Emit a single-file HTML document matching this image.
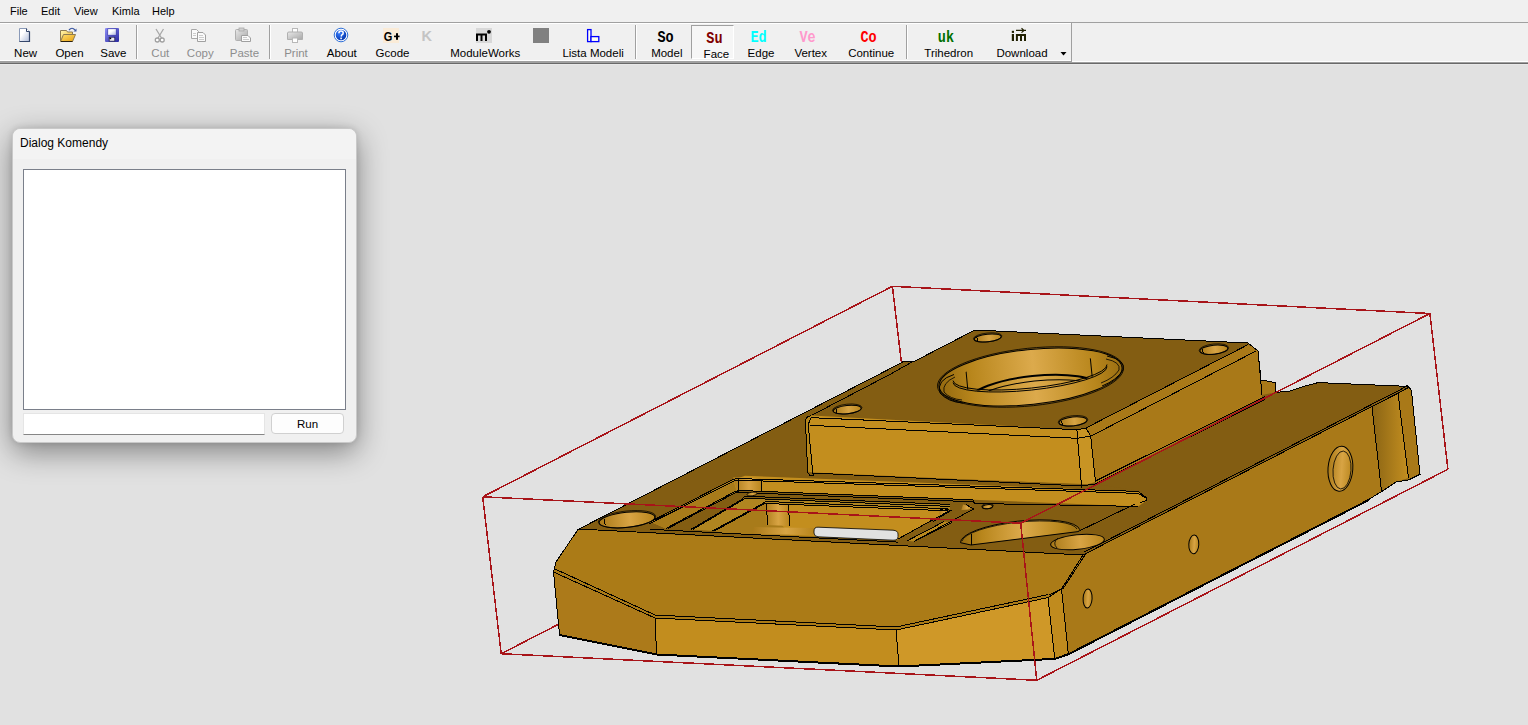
<!DOCTYPE html>
<html><head><meta charset="utf-8">
<style>
*{margin:0;padding:0;box-sizing:border-box}
html,body{width:1528px;height:725px;overflow:hidden;background:#e1e1e1;font-family:"Liberation Sans",sans-serif;position:relative}
.abs{position:absolute}
#menubar{left:0;top:0;width:1528px;height:22px;background:#f0f0f0}
.mi{position:absolute;top:5px;font-size:11px;color:#000;line-height:13px;white-space:nowrap}
#tbarea{left:0;top:22px;width:1528px;height:41px;background:#f0f0f0;border-top:1px solid #a0a0a0}
#tbline1{left:0;top:63px;width:1528px;height:1px;background:#696969}
#tbline2{left:0;top:62px;width:1528px;height:1px;background:#a0a0a0}
#tbline0{left:0;top:64px;width:1528px;height:1px;background:#e8e8e8}
#tbl3{left:0;top:61px;width:1071px;height:1px;background:#a0a0a0}
#tbl4{left:0;top:60px;width:1071px;height:1px;background:#fff}
#tbl5{left:1072px;top:61px;width:456px;height:1px;background:#fff}
#tbhl{left:0;top:23px;width:1071px;height:1px;background:#fff}
#tbright{left:1071px;top:23px;width:1px;height:39px;background:#a0a0a0}
.lbl{position:absolute;top:47px;font-size:11.5px;line-height:13px;color:#000;white-space:nowrap;transform:translateX(-50%)}
.dis{color:#8d8d8d}
.sep{position:absolute;top:25px;width:2px;height:34px;border-left:1px solid #a0a0a0;border-right:1px solid #fff}
.big{position:absolute;top:30px;font-family:"Liberation Mono",monospace;font-weight:bold;font-size:13.5px;line-height:14px;white-space:nowrap;transform:translateX(-50%) scaleY(1.2);transform-origin:50% 0}
#dlg{left:12px;top:128px;width:345px;height:315px;background:#f0f0f0;border:1px solid #c9c9c9;border-radius:8px;box-shadow:0 9px 30px rgba(0,0,0,0.42),0 0 6px rgba(0,0,0,0.12)}
</style></head><body>
<div id="menubar" class="abs">
<span class="mi" style="left:10px">File</span>
<span class="mi" style="left:41px">Edit</span>
<span class="mi" style="left:74px">View</span>
<span class="mi" style="left:112px">Kimla</span>
<span class="mi" style="left:152px">Help</span>
</div>
<div id="tbarea" class="abs"></div>
<div id="tbhl" class="abs"></div>
<div id="tbright" class="abs"></div>
<div id="tbline2" class="abs"></div>
<div id="tbline1" class="abs"></div>
<div id="tbline0" class="abs"></div>
<div id="tbl3" class="abs"></div><div id="tbl4" class="abs"></div><div id="tbl5" class="abs"></div>

<!-- TOOLBAR -->
<div class="abs" style="left:691px;top:25px;width:43px;height:34px;background:#f6f6f6;border-top:1px solid #a0a0a0;border-left:1px solid #a0a0a0;border-right:1px solid #fff;border-bottom:1px solid #fff"></div>

<span class="lbl" style="left:25.6px">New</span>
<span class="lbl" style="left:69.5px">Open</span>
<span class="lbl" style="left:113.4px">Save</span>
<div class="sep" style="left:136px"></div>
<span class="lbl dis" style="left:160.3px">Cut</span>
<span class="lbl dis" style="left:200.3px">Copy</span>
<span class="lbl dis" style="left:244.5px">Paste</span>
<div class="sep" style="left:269px"></div>
<span class="lbl dis" style="left:296px">Print</span>
<span class="lbl" style="left:341.8px">About</span>
<span class="lbl" style="left:392.5px">Gcode</span>
<span class="lbl" style="left:485.3px">ModuleWorks</span>
<span class="lbl" style="left:593.1px">Lista Modeli</span>
<div class="sep" style="left:635px"></div>
<span class="lbl" style="left:666.8px">Model</span>
<span class="lbl" style="left:716.4px;top:48px">Face</span>
<span class="lbl" style="left:761px">Edge</span>
<span class="lbl" style="left:810.7px">Vertex</span>
<span class="lbl" style="left:871.2px">Continue</span>
<div class="sep" style="left:906px"></div>
<span class="lbl" style="left:948.7px">Trihedron</span>
<span class="lbl" style="left:1022px">Download</span>


<svg class="abs" style="left:0;top:0" width="1100" height="64" viewBox="0 0 1100 64">
<defs>
<linearGradient id="gnew" x1="0" y1="0" x2="1" y2="1"><stop offset="0.35" stop-color="#fff"/><stop offset="1" stop-color="#aebbd8"/></linearGradient>
<linearGradient id="gfold" x1="0" y1="0" x2="1" y2="1"><stop offset="0" stop-color="#fff6b0"/><stop offset="1" stop-color="#f0b020"/></linearGradient>
<linearGradient id="gflap" x1="0" y1="0" x2="1" y2="1"><stop offset="0" stop-color="#ffe070"/><stop offset="1" stop-color="#e8a010"/></linearGradient>
<linearGradient id="gsave" x1="0" y1="0" x2="1" y2="1"><stop offset="0" stop-color="#9090f8"/><stop offset="1" stop-color="#2828a0"/></linearGradient>
<linearGradient id="glab" x1="0" y1="0" x2="1" y2="1"><stop offset="0.4" stop-color="#fff"/><stop offset="1" stop-color="#b0b8e0"/></linearGradient>
<radialGradient id="gabout" cx="0.35" cy="0.3" r="0.8"><stop offset="0" stop-color="#3a80ff"/><stop offset="1" stop-color="#0030a8"/></radialGradient>
<linearGradient id="ggray" x1="0" y1="0" x2="1" y2="1"><stop offset="0" stop-color="#e8e8e8"/><stop offset="1" stop-color="#a8a8a8"/></linearGradient>
</defs>
<!-- New -->
<path d="M19.5,28.5 H26.5 L29.5,31.5 V41.5 H19.5 Z" fill="url(#gnew)" stroke="#8a9ab8" stroke-width="1"/>
<path d="M29.5,31.5 V41.5 H19.5" fill="none" stroke="#34466a" stroke-width="1.2"/>
<path d="M26.5,28.5 V31.5 H29.5" fill="#fff" stroke="#34466a" stroke-width="1"/>
<!-- Open -->
<path d="M60.5,41.5 V30.5 H66.5 L67.5,32 H72.5 V34" fill="url(#gfold)" stroke="#8c7a52" stroke-width="1"/>
<path d="M60.5,41.5 L63.5,34.5 H75.5 L72.5,41.5 Z" fill="url(#gflap)" stroke="#8c7a52" stroke-width="1"/>
<path d="M61,41.5 H72.5" stroke="#2a2010" stroke-width="1"/>
<path d="M69,30 Q72,26.5 75,30" fill="none" stroke="#3a56a0" stroke-width="1.2"/>
<path d="M73.5,31.5 L76.5,28.5 L76.5,31.5 Z" fill="#3a56a0"/>
<!-- Save -->
<rect x="105" y="28" width="14" height="14" rx="1" fill="url(#gsave)"/>
<rect x="107.8" y="28.8" width="8.4" height="6.4" fill="url(#glab)" stroke="#2a2aa0" stroke-width="0.6"/>
<rect x="109.2" y="37.2" width="5.6" height="4" fill="#eee" stroke="#222050" stroke-width="0.8"/>
<rect x="109.6" y="37.6" width="1.6" height="1.6" fill="#000"/>
<!-- Cut -->
<path d="M156,29 L161.5,38 M163.5,29 L158,38" stroke="#a8a8a8" stroke-width="1.3" fill="none"/>
<circle cx="157.3" cy="40" r="2" fill="#fff" stroke="#a0a0a0" stroke-width="1.3"/>
<circle cx="162.2" cy="40" r="2" fill="#fff" stroke="#a0a0a0" stroke-width="1.3"/>
<!-- Copy -->
<path d="M191.5,29.5 H196.5 L198.5,31.5 V38.5 H191.5 Z" fill="#fafafa" stroke="#a8a8a8"/>
<path d="M197.5,32.5 H203 L205.5,35 V41.5 H197.5 Z" fill="#fafafa" stroke="#a0a0a0"/>
<path d="M199,35.5 H203 M199,37.5 H204 M199,39.5 H204 M193,33.5 H196 M193,35.5 H196" stroke="#c0c0c0" stroke-width="0.8"/>
<!-- Paste -->
<rect x="235.5" y="29.5" width="12" height="11" rx="1" fill="url(#ggray)" stroke="#b0b0b0"/>
<rect x="239" y="28" width="5" height="3" fill="#d0d0d0" stroke="#a8a8a8" stroke-width="0.8"/>
<path d="M241.5,35.5 H248 L250.5,38 V41.5 H241.5 Z" fill="#fafafa" stroke="#a0a0a0"/>
<path d="M243,37.5 H247 M243,39.5 H249" stroke="#c0c0c0" stroke-width="0.8"/>
<!-- Print -->
<rect x="292.5" y="28.5" width="5" height="4" fill="#fff" stroke="#b8b8b8"/>
<path d="M287.5,33 Q287.5,32 289,32 H301 Q302.5,32 302.5,33 V39.5 H287.5 Z" fill="url(#ggray)" stroke="#b0b0b0"/>
<rect x="292.5" y="38" width="5" height="4.5" fill="#fff" stroke="#b8b8b8"/>
<!-- About -->
<circle cx="341" cy="35" r="6.8" fill="#fff" stroke="#3070d8" stroke-width="1"/>
<circle cx="341" cy="35" r="5.3" fill="url(#gabout)"/>
<path d="M338.9,33.2 Q338.9,31 341,31 Q343.2,31 343.2,33 Q343.2,34.4 341.6,35.2 L341.1,36.6" fill="none" stroke="#fff" stroke-width="1.5"/>
<rect x="340.3" y="37.6" width="1.6" height="1.6" fill="#fff"/>
<!-- G+ -->
<rect x="383" y="28" width="16" height="15" fill="#faebd7"/>
<text x="383.8" y="41" font-family="Liberation Sans" font-weight="bold" font-size="13" fill="#000" transform="translate(383.8 0) scale(0.85 1) translate(-383.8 0)">G</text>
<rect x="396" y="33.2" width="2" height="6.6" fill="#000"/>
<rect x="394" y="35.6" width="5.6" height="1.6" fill="#000"/>
<!-- K -->
<text x="421.5" y="40.8" font-family="Liberation Sans" font-weight="bold" font-size="14.5" fill="#c4c4c4">K</text>
<!-- m -->
<rect x="476" y="28" width="16" height="15" fill="#d8d8d8"/>
<path d="M477,41 V34.5 H486 V41 M481.5,34.5 V41" fill="none" stroke="#000" stroke-width="2"/>
<circle cx="489" cy="31.8" r="1.9" fill="#000"/>
<!-- gray square -->
<rect x="533" y="28" width="16" height="15" fill="#808080"/>
<!-- L -->
<rect x="587.6" y="29.6" width="3.4" height="12" fill="#fffff0" stroke="#0000ff" stroke-width="1.3"/>
<rect x="591" y="36.6" width="7.8" height="5" fill="#fffff0" stroke="#0000ff" stroke-width="1.3"/>
<!-- im -->
<rect x="1011.8" y="30.8" width="2.2" height="2.1" fill="#202000"/>
<rect x="1011.8" y="34" width="2.2" height="7" fill="#202000"/>
<path d="M1016.9,41 V35 H1025 V41 M1021,35 V41" fill="none" stroke="#202000" stroke-width="2"/>
<path d="M1016,30.4 H1026 M1021.5,28.2 L1024,30.4 L1021.5,32.6" fill="none" stroke="#202000" stroke-width="1.2"/>
<!-- dropdown arrow -->
<path d="M1060.5,52 H1066.5 L1063.5,55.5 Z" fill="#000"/>
</svg>

<span class="big" style="left:665.6px;color:#000">So</span>
<span class="big" style="left:714.4px;top:31px;color:#800000">Su</span>
<span class="big" style="left:758.6px;color:#00ffff">Ed</span>
<span class="big" style="left:807.5px;color:#ff99cc">Ve</span>
<span class="big" style="left:868.5px;color:#ff0000">Co</span>
<span class="big" style="left:945.9px;color:#007000">uk</span>


<div id="dlg" class="abs"><div style="height:30px;background:#f3f3f3;border-radius:8px 8px 0 0"></div></div>
<div class="abs" style="left:20px;top:136px;font-size:12px;line-height:15px;color:#000;white-space:nowrap">Dialog Komendy</div>
<div class="abs" style="left:23px;top:169px;width:323px;height:241px;background:#fff;border:1px solid #7a7f8a"></div>
<div class="abs" style="left:23px;top:413px;width:242px;height:22px;background:#fff;border:1px solid #e5e5e5;border-bottom:1px solid #868686"></div>
<div class="abs" style="left:271px;top:413px;width:73px;height:21px;background:#fdfdfd;border:1px solid #d0d0d0;border-radius:4px"></div>
<div class="abs" style="left:297px;top:418px;font-size:11.5px;line-height:13px;color:#000;white-space:nowrap">Run</div>

<svg class="abs" style="left:0;top:0" width="1528" height="725" viewBox="0 0 1528 725">
<defs><linearGradient id="gbore" x1="0" x2="1" y1="0" y2="0"><stop offset="0" stop-color="#94690f"/><stop offset="0.18" stop-color="#b8861c"/><stop offset="0.52" stop-color="#dcaa4c"/><stop offset="0.85" stop-color="#b8861c"/><stop offset="1" stop-color="#9a6e12"/></linearGradient><linearGradient id="ghole" x1="0" x2="1" y1="0" y2="0"><stop offset="0" stop-color="#a97918"/><stop offset="0.55" stop-color="#d8a444"/><stop offset="1" stop-color="#b8851c"/></linearGradient><linearGradient id="gend" x1="0" x2="1" y1="0" y2="0"><stop offset="0" stop-color="#8a6414"/><stop offset="1" stop-color="#c48f20"/></linearGradient></defs>
<polygon points="578.0,529.5 901.0,363.0 904.0,361.0 915.0,361.0 975.0,330.0 1248.0,343.0 1258.0,351.0 1261.0,380.0 1275.0,382.5 1275.0,392.5 1290.0,391.0 1305.0,386.0 1318.0,382.6 1408.5,386.4 1411.4,390.3 1420.0,474.2 1408.5,480.0 1396.0,482.0 1381.5,491.6 1369.0,499.3 1069.0,653.5 1054.7,658.4 899.0,666.0 656.6,654.0 559.5,634.5 553.5,572.0 556.0,562.0" fill="#835d12" stroke="none" stroke-width="1" />
<polygon points="805.4,419.4 808.0,416.5 811.5,415.5 1077.0,429.7 1081.4,484.5 812.6,472.4 807.6,471.3" fill="#c38e1e" stroke="none" stroke-width="1" />
<polygon points="805.4,419.4 808.0,416.5 811.5,415.5 812.6,417.7 811.0,418.0 808.2,424.3 812.6,471.3 807.6,471.3" fill="#b5861c" stroke="none" stroke-width="1" />
<polygon points="1077.0,430.0 1085.9,428.0 1090.7,436.2 1095.5,482.0 1081.7,486.0" fill="#c89424" stroke="none" stroke-width="1" />
<polygon points="1085.9,428.0 1248.3,344.5 1257.9,350.3 1262.0,398.0 1095.5,484.0 1090.7,436.2" fill="#a97918" stroke="none" stroke-width="1" />
<polygon points="1261.0,380.0 1275.0,382.5 1275.0,392.5 1262.0,395.0" fill="#a97918" stroke="none" stroke-width="1" />
<polygon points="1083.0,555.0 1372.0,406.0 1381.5,491.6 1369.0,499.3 1068.3,653.5 1061.5,589.0" fill="#a97918" stroke="none" stroke-width="1" />
<polygon points="1372.0,406.5 1398.0,393.2 1408.5,478.0 1396.0,482.0 1381.5,491.6" fill="url(#gend)" stroke="none" stroke-width="1" />
<polygon points="1398.0,393.2 1408.5,387.4 1411.4,390.3 1420.0,474.2 1408.5,480.0" fill="#a97918" stroke="none" stroke-width="1" />
<polygon points="578.0,529.0 1083.0,555.0 1061.5,589.0 1048.0,597.6 896.0,630.0 655.0,618.0 553.5,572.0 556.0,562.0" fill="#ab7b17" stroke="none" stroke-width="1" />
<polygon points="553.5,572.0 655.0,618.0 656.6,654.0 559.5,634.5" fill="#ac7a1a" stroke="none" stroke-width="1" />
<polygon points="655.0,618.0 896.0,630.0 899.0,666.0 656.6,654.0" fill="#c28d1e" stroke="none" stroke-width="1" />
<polygon points="896.0,630.0 1048.0,597.6 1054.7,658.4 899.0,666.0" fill="#cf9828" stroke="none" stroke-width="1" />
<polygon points="1048.0,597.6 1061.5,589.0 1068.3,653.5 1054.7,658.4" fill="#c08b1e" stroke="none" stroke-width="1" />
<polygon points="812.0,473.5 1081.4,484.0 1095.0,484.0 1143.0,491.6 812.0,478.4" fill="#835d12" stroke="none" stroke-width="1" />
<polygon points="650.3,521.7 733.0,480.0 745.0,475.7 1138.0,491.4 1146.0,497.5 1146.0,501.0 1138.0,506.4 740.0,490.5 665.9,528.5" fill="#c38e1e" stroke="none" stroke-width="1" />
<polygon points="650.3,521.7 733.0,480.0 737.0,492.0 665.9,528.5" fill="#a87b1a" stroke="none" stroke-width="1" />
<polygon points="665.9,528.5 737.0,491.5 973.0,499.8 973.0,505.5 950.0,504.4 743.5,498.5 690.7,529.5" fill="#835d12" stroke="none" stroke-width="1" />
<polygon points="690.7,529.5 743.5,498.5 950.0,504.4 950.0,508.9 764.0,503.0 712.4,531.0" fill="#b08520" stroke="none" stroke-width="1" />
<polygon points="712.4,531.0 764.0,503.0 950.0,508.9 946.0,512.0 898.0,539.5 730.0,534.0" fill="#a87b1a" stroke="none" stroke-width="1" />
<polygon points="764.0,503.0 950.0,508.9 946.0,512.0 898.0,539.5 790.0,535.0" fill="#c38e1e" stroke="none" stroke-width="1" />
<polygon points="733.0,477.2 761.0,478.3 762.0,491.4 737.0,490.4" fill="url(#ghole)" stroke="none" stroke-width="1" />
<polygon points="764.0,503.0 788.0,504.0 790.0,526.0 766.0,525.0" fill="url(#ghole)" stroke="none" stroke-width="1" />
<polygon points="754.0,527.0 814.0,528.0 814.0,535.0 752.0,534.0" fill="url(#ghole)" stroke="none" stroke-width="1" />
<polygon points="963.0,504.5 972.0,507.0 966.0,513.0 961.0,511.0" fill="url(#ghole)" stroke="none" stroke-width="1" />
<polygon points="940.0,509.5 948.0,511.0 944.0,516.0 939.0,514.0" fill="url(#ghole)" stroke="none" stroke-width="1" />
<polygon points="648.0,529.2 898.0,542.1 900.0,546.0 648.0,533.0" fill="#835d12" stroke="none" stroke-width="1" />
<path d="M818,527.2 L893,530.2 Q898,530.6 898,534 L898,536.5 Q898,540.4 893,540.2 L818,536.8 Q814,536.5 814,533 L814,531 Q814,527 818,527.2 Z" fill="#e1e1e1" stroke="#000" stroke-width="0.8"/>
<polyline points="650.3,521.7 731.0,480.5 736.0,478.5 1138.0,491.4 1146.0,497.5 1146.0,500.5 1140.0,503.0" fill="none" stroke="#000" stroke-width="1" shape-rendering="crispEdges" />
<polyline points="649.3,523.7 731.0,482.5 736.0,480.1 1138.0,493.4 1146.0,498.1 1146.0,500.5 1140.0,503.0" fill="none" stroke="#000" stroke-width="1" shape-rendering="crispEdges" />
<polyline points="665.9,528.5 735.0,491.5 740.0,490.5 973.0,499.8 975.0,504.0" fill="none" stroke="#000" stroke-width="1" shape-rendering="crispEdges" />
<polyline points="667.9,528.5 735.8,492.5 740.0,492.5 973.0,501.8 975.0,504.0" fill="none" stroke="#000" stroke-width="1" shape-rendering="crispEdges" />
<polyline points="690.7,529.5 741.0,500.0 745.0,496.2 950.0,504.4" fill="none" stroke="#000" stroke-width="1" shape-rendering="crispEdges" />
<polyline points="692.7,529.5 741.6,500.6 745.0,498.2 950.0,506.4" fill="none" stroke="#000" stroke-width="1" shape-rendering="crispEdges" />
<polyline points="712.4,531.0 762.0,504.0 766.0,501.5 948.0,508.8" fill="none" stroke="#000" stroke-width="1" shape-rendering="crispEdges" />
<polyline points="714.4,531.0 762.6,504.6 766.0,503.5 948.0,510.8" fill="none" stroke="#000" stroke-width="1" shape-rendering="crispEdges" />
<line x1="1138.0" y1="506.4" x2="975.0" y2="503.5" stroke="#000" stroke-width="1" shape-rendering="crispEdges"/>
<polygon points="973.6,509.0 913.6,541.6 897.6,539.2 948.8,511.2" fill="#835d12" stroke="none" stroke-width="1" />
<polygon points="944.0,521.6 907.2,540.8 913.6,541.6 952.0,522.4" fill="#b8881e" stroke="none" stroke-width="1" />
<polyline points="966.0,504.5 973.6,509.0 913.6,541.6" fill="none" stroke="#000" stroke-width="1" shape-rendering="crispEdges" />
<polyline points="944.0,521.6 907.2,540.8" fill="none" stroke="#000" stroke-width="1" shape-rendering="crispEdges" />
<polyline points="952.0,522.4 913.6,541.6" fill="none" stroke="#000" stroke-width="1" shape-rendering="crispEdges" />
<polyline points="940.0,509.5 948.8,511.2 931.0,520.8 897.6,539.2" fill="none" stroke="#000" stroke-width="1" shape-rendering="crispEdges" />
<polyline points="943.0,508.5 951.0,510.5 933.0,521.5" fill="none" stroke="#000" stroke-width="1" shape-rendering="crispEdges" />
<line x1="766.0" y1="504.0" x2="768.0" y2="525.0" stroke="#000" stroke-width="1" shape-rendering="crispEdges"/>
<line x1="788.0" y1="504.0" x2="790.0" y2="526.0" stroke="#000" stroke-width="1" shape-rendering="crispEdges"/>
<line x1="738.0" y1="479.0" x2="738.0" y2="492.0" stroke="#000" stroke-width="1" shape-rendering="crispEdges"/>
<line x1="761.0" y1="479.5" x2="762.0" y2="491.0" stroke="#000" stroke-width="1" shape-rendering="crispEdges"/>
<line x1="650.0" y1="529.3" x2="898.0" y2="542.1" stroke="#000" stroke-width="1" shape-rendering="crispEdges"/>
<ellipse cx="752" cy="494" rx="5" ry="1.8" transform="rotate(-6 752 494)" fill="url(#ghole)" stroke="#000" stroke-width="0.8" />
<ellipse cx="627" cy="519.8" rx="28" ry="7.6" transform="rotate(-6 627 519.8)" fill="url(#ghole)" stroke="#000" stroke-width="1" />
<ellipse cx="627" cy="519.1999999999999" rx="28.8" ry="8.2" transform="rotate(-6 627 519.1999999999999)" fill="none" stroke="#000" stroke-width="0.7" />
<line x1="604.6" y1="518.7" x2="605.1" y2="525.5" stroke="#000" stroke-width="1" shape-rendering="crispEdges"/>
<ellipse cx="847.2" cy="409.6" rx="14" ry="4.2" transform="rotate(-6 847.2 409.6)" fill="url(#ghole)" stroke="#000" stroke-width="1" />
<ellipse cx="847.2" cy="409.0" rx="14.8" ry="4.8" transform="rotate(-6 847.2 409.0)" fill="none" stroke="#000" stroke-width="0.7" />
<line x1="836.0" y1="409.0" x2="836.5" y2="412.8" stroke="#000" stroke-width="1" shape-rendering="crispEdges"/>
<ellipse cx="987.7" cy="338" rx="13.5" ry="3.8" transform="rotate(-6 987.7 338)" fill="url(#ghole)" stroke="#000" stroke-width="1" />
<ellipse cx="987.7" cy="337.4" rx="14.3" ry="4.3999999999999995" transform="rotate(-6 987.7 337.4)" fill="none" stroke="#000" stroke-width="0.7" />
<line x1="976.9" y1="337.4" x2="977.4" y2="340.9" stroke="#000" stroke-width="1" shape-rendering="crispEdges"/>
<ellipse cx="1213.9" cy="349.7" rx="14" ry="4.5" transform="rotate(-6 1213.9 349.7)" fill="url(#ghole)" stroke="#000" stroke-width="1" />
<ellipse cx="1213.9" cy="349.09999999999997" rx="14.8" ry="5.1" transform="rotate(-6 1213.9 349.09999999999997)" fill="none" stroke="#000" stroke-width="0.7" />
<line x1="1202.7" y1="349.0" x2="1203.2" y2="353.1" stroke="#000" stroke-width="1" shape-rendering="crispEdges"/>
<ellipse cx="1073" cy="421.4" rx="14" ry="4.5" transform="rotate(-6 1073 421.4)" fill="url(#ghole)" stroke="#000" stroke-width="1" />
<ellipse cx="1073" cy="420.79999999999995" rx="14.8" ry="5.1" transform="rotate(-6 1073 420.79999999999995)" fill="none" stroke="#000" stroke-width="0.7" />
<line x1="1061.8" y1="420.7" x2="1062.3" y2="424.8" stroke="#000" stroke-width="1" shape-rendering="crispEdges"/>
<ellipse cx="987.5" cy="506.7" rx="5" ry="2" transform="rotate(-6 987.5 506.7)" fill="url(#ghole)" stroke="#000" stroke-width="1" />
<ellipse cx="987.5" cy="506.09999999999997" rx="5.8" ry="2.6" transform="rotate(-6 987.5 506.09999999999997)" fill="none" stroke="#000" stroke-width="0.7" />
<clipPath id="cpin"><ellipse cx="1030" cy="374" rx="77" ry="15.5" transform="rotate(-6 1030 374)"/></clipPath>
<clipPath id="cpout"><ellipse cx="1030.5" cy="377" rx="92" ry="27.5" transform="rotate(-6 1030.5 377)"/></clipPath>
<ellipse cx="1030.5" cy="377" rx="92" ry="27.5" transform="rotate(-6 1030.5 377)" fill="url(#gbore)" stroke="none" stroke-width="1" />
<g clip-path="url(#cpin)"><ellipse cx="1034" cy="393" rx="64" ry="17" transform="rotate(-6 1034 393)" fill="none" stroke="#000" stroke-width="2"/><ellipse cx="1036" cy="396" rx="62" ry="15" transform="rotate(-6 1036 396)" fill="none" stroke="#000" stroke-width="1"/><line x1="965" y1="360" x2="968" y2="392" stroke="#000" stroke-width="1"/><line x1="1090" y1="355" x2="1093" y2="385" stroke="#000" stroke-width="1"/></g>
<path d="M953,380.6 A77,15.5 -6 0 0 1107,364.5" fill="none" stroke="#000" stroke-width="1"/>
<path d="M953,382.6 A77,15.5 -6 0 0 1107,366.5" fill="none" stroke="#000" stroke-width="1"/>
<ellipse cx="1030.5" cy="377" rx="92" ry="27.5" transform="rotate(-6 1030.5 377)" fill="none" stroke="#000" stroke-width="1" />
<ellipse cx="1030.5" cy="377" rx="93.5" ry="28.8" transform="rotate(-6 1030.5 377)" fill="none" stroke="#000" stroke-width="0.8" />
<path d="M954,374.5 Q936,380 940,393 Q948,402 963,403" fill="none" stroke="#000" stroke-width="1"/>
<path d="M955,377 Q942,383 944,392 Q950,399 962,400" fill="none" stroke="#000" stroke-width="0.8"/>
<path d="M1107,356 Q1126,360 1123,370 Q1117,380 1102,386" fill="none" stroke="#000" stroke-width="1"/>
<path d="M1106,359 Q1121,362 1119,370 Q1114,378 1101,383" fill="none" stroke="#000" stroke-width="0.8"/>
<path d="M960.5,542.7 A60,15.5 -6 0 1 1079.7,529.5 L1078.8,531.5 L971,545 Z" fill="url(#gbore)" stroke="#000" stroke-width="1"/>
<path d="M962,541 A58,14 -6 0 1 1077,529" fill="none" stroke="#000" stroke-width="0.8"/>
<line x1="971.5" y1="534.0" x2="971.5" y2="545.0" stroke="#000" stroke-width="1" shape-rendering="crispEdges"/>
<ellipse cx="1077.5" cy="542" rx="27" ry="7.3" transform="rotate(-6 1077.5 542)" fill="url(#ghole)" stroke="#000" stroke-width="1" />
<path d="M1058,538 Q1052,543 1057,548" fill="none" stroke="#000" stroke-width="0.8"/>
<line x1="1079.8" y1="530.7" x2="1135.0" y2="504.0" stroke="#000" stroke-width="1" shape-rendering="crispEdges"/>
<ellipse cx="1340.4" cy="468.7" rx="12.4" ry="22.5" transform="rotate(4 1340.4 468.7)" fill="url(#ghole)" stroke="#000" stroke-width="1" />
<ellipse cx="1342" cy="470" rx="9" ry="19" transform="rotate(4 1342 470)" fill="none" stroke="#000" stroke-width="0.8" />
<ellipse cx="1193.8" cy="544.4" rx="5" ry="9.3" transform="rotate(3 1193.8 544.4)" fill="url(#ghole)" stroke="#000" stroke-width="1" />
<ellipse cx="1087.6" cy="598.5" rx="4.5" ry="9.5" transform="rotate(3 1087.6 598.5)" fill="url(#ghole)" stroke="#000" stroke-width="1" />
<polyline points="578.0,529.5 901.0,363.0 904.0,361.0 915.0,361.0 975.0,330.0 1248.0,343.0 1258.0,351.0 1261.0,380.0 1275.0,382.5 1275.0,392.5 1290.0,391.0 1305.0,386.0 1318.0,382.6 1408.5,386.4 1411.4,390.3 1420.0,474.2 1408.5,480.0 1396.0,482.0 1381.5,491.6 1369.0,499.3 1069.0,653.5 1054.7,658.4 899.0,666.0 656.6,654.0 559.5,634.5 553.5,572.0 556.0,562.0 578.0,529.5" fill="none" stroke="#000" stroke-width="1" shape-rendering="crispEdges" />
<polyline points="559.5,635.0 656.6,654.5 899.0,666.5 1054.7,658.9 1069.0,654.0 1369.0,499.8" fill="none" stroke="#000" stroke-width="2" shape-rendering="crispEdges" />
<polyline points="812.6,417.7 1077.0,429.7 1085.9,428.0 1248.3,344.5" fill="none" stroke="#000" stroke-width="1" shape-rendering="crispEdges" />
<polyline points="811.5,415.4 890.0,374.4 912.0,362.0" fill="none" stroke="#000" stroke-width="1" shape-rendering="crispEdges" />
<line x1="809.7" y1="425.3" x2="1076.9" y2="438.3" stroke="#000" stroke-width="1" shape-rendering="crispEdges"/>
<polyline points="1076.9,438.3 1090.7,436.2 1256.5,350.8" fill="none" stroke="#000" stroke-width="1" shape-rendering="crispEdges" />
<polyline points="1076.9,430.0 1085.9,428.0 1090.7,436.2" fill="none" stroke="#000" stroke-width="1" shape-rendering="crispEdges" />
<line x1="805.4" y1="419.4" x2="807.6" y2="471.3" stroke="#000" stroke-width="1" shape-rendering="crispEdges"/>
<line x1="808.2" y1="424.3" x2="812.6" y2="471.3" stroke="#000" stroke-width="1" shape-rendering="crispEdges"/>
<polyline points="805.4,419.4 808.0,416.5 811.5,415.5" fill="none" stroke="#000" stroke-width="1" shape-rendering="crispEdges" />
<polyline points="808.2,424.3 811.0,418.0 812.6,417.7" fill="none" stroke="#000" stroke-width="1" shape-rendering="crispEdges" />
<polyline points="807.0,471.3 810.0,475.5 813.7,475.7 812.6,471.3" fill="none" stroke="#000" stroke-width="1" shape-rendering="crispEdges" />
<line x1="1076.9" y1="430.0" x2="1081.7" y2="488.0" stroke="#000" stroke-width="1" shape-rendering="crispEdges"/>
<line x1="1090.7" y1="436.2" x2="1095.5" y2="481.7" stroke="#000" stroke-width="1" shape-rendering="crispEdges"/>
<polyline points="812.0,473.0 1081.4,486.0 1095.5,484.0 1265.0,399.5" fill="none" stroke="#000" stroke-width="1" shape-rendering="crispEdges" />
<polyline points="1095.5,481.0 1265.0,396.5" fill="none" stroke="#000" stroke-width="1" shape-rendering="crispEdges" />
<polyline points="1261.0,380.0 1275.0,382.5 1275.0,392.5" fill="none" stroke="#000" stroke-width="1" shape-rendering="crispEdges" />
<line x1="1258.0" y1="351.0" x2="1262.0" y2="395.0" stroke="#000" stroke-width="1" shape-rendering="crispEdges"/>
<line x1="1083.0" y1="555.0" x2="1372.0" y2="406.5" stroke="#000" stroke-width="1" shape-rendering="crispEdges"/>
<line x1="1084.0" y1="552.2" x2="1372.0" y2="404.2" stroke="#000" stroke-width="1" shape-rendering="crispEdges"/>
<polyline points="1372.0,406.5 1398.0,393.2 1408.5,387.4" fill="none" stroke="#000" stroke-width="1" shape-rendering="crispEdges" />
<polyline points="1372.0,404.2 1398.0,391.0 1408.0,385.2" fill="none" stroke="#000" stroke-width="1" shape-rendering="crispEdges" />
<line x1="1372.0" y1="406.7" x2="1381.5" y2="491.6" stroke="#000" stroke-width="1" shape-rendering="crispEdges"/>
<line x1="1398.0" y1="393.2" x2="1408.5" y2="478.0" stroke="#000" stroke-width="1" shape-rendering="crispEdges"/>
<line x1="578.0" y1="529.0" x2="1083.0" y2="555.0" stroke="#000" stroke-width="1" shape-rendering="crispEdges"/>
<polyline points="1083.0,555.0 1061.5,589.0 1048.0,597.6" fill="none" stroke="#000" stroke-width="1" shape-rendering="crispEdges" />
<polyline points="1086.0,553.5 1063.5,588.0 1049.0,595.0" fill="none" stroke="#000" stroke-width="1" shape-rendering="crispEdges" />
<polyline points="553.5,572.0 655.0,618.0 896.0,630.0 1048.0,597.6" fill="none" stroke="#000" stroke-width="1" shape-rendering="crispEdges" />
<polyline points="555.0,569.0 655.0,615.0 896.0,627.0 1048.0,594.6" fill="none" stroke="#000" stroke-width="1" shape-rendering="crispEdges" />
<line x1="655.0" y1="618.0" x2="656.6" y2="654.0" stroke="#000" stroke-width="1" shape-rendering="crispEdges"/>
<line x1="896.0" y1="630.0" x2="899.0" y2="666.0" stroke="#000" stroke-width="1" shape-rendering="crispEdges"/>
<line x1="1048.0" y1="597.6" x2="1054.7" y2="658.4" stroke="#000" stroke-width="1" shape-rendering="crispEdges"/>
<line x1="1061.5" y1="589.0" x2="1068.3" y2="653.5" stroke="#000" stroke-width="1" shape-rendering="crispEdges"/>
<line x1="892.4" y1="286.3" x2="1429.9" y2="313.5" stroke="#a81419" stroke-width="1.5" shape-rendering="crispEdges"/>
<line x1="892.4" y1="286.3" x2="482.7" y2="496.8" stroke="#a81419" stroke-width="1.5" shape-rendering="crispEdges"/>
<line x1="1429.9" y1="313.5" x2="1447.9" y2="469.3" stroke="#a81419" stroke-width="1.5" shape-rendering="crispEdges"/>
<line x1="1429.9" y1="313.5" x2="1020.7" y2="523.2" stroke="#a81419" stroke-width="1.5" shape-rendering="crispEdges"/>
<line x1="482.7" y1="496.8" x2="1020.7" y2="523.2" stroke="#a81419" stroke-width="1.5" shape-rendering="crispEdges"/>
<line x1="482.7" y1="496.8" x2="501.2" y2="653.7" stroke="#a81419" stroke-width="1.5" shape-rendering="crispEdges"/>
<line x1="1020.7" y1="523.2" x2="1036.75" y2="680.3" stroke="#a81419" stroke-width="1.5" shape-rendering="crispEdges"/>
<line x1="501.2" y1="653.7" x2="1036.75" y2="680.3" stroke="#a81419" stroke-width="1.5" shape-rendering="crispEdges"/>
<line x1="1447.9" y1="469.3" x2="1036.75" y2="680.3" stroke="#a81419" stroke-width="1.5" shape-rendering="crispEdges"/>
<line x1="892.4" y1="286.3" x2="901.4" y2="362.4" stroke="#a81419" stroke-width="1.5" shape-rendering="crispEdges"/>
<line x1="501.2" y1="653.7" x2="558" y2="624.5" stroke="#a81419" stroke-width="1.5" shape-rendering="crispEdges"/>
</svg>
</body></html>
